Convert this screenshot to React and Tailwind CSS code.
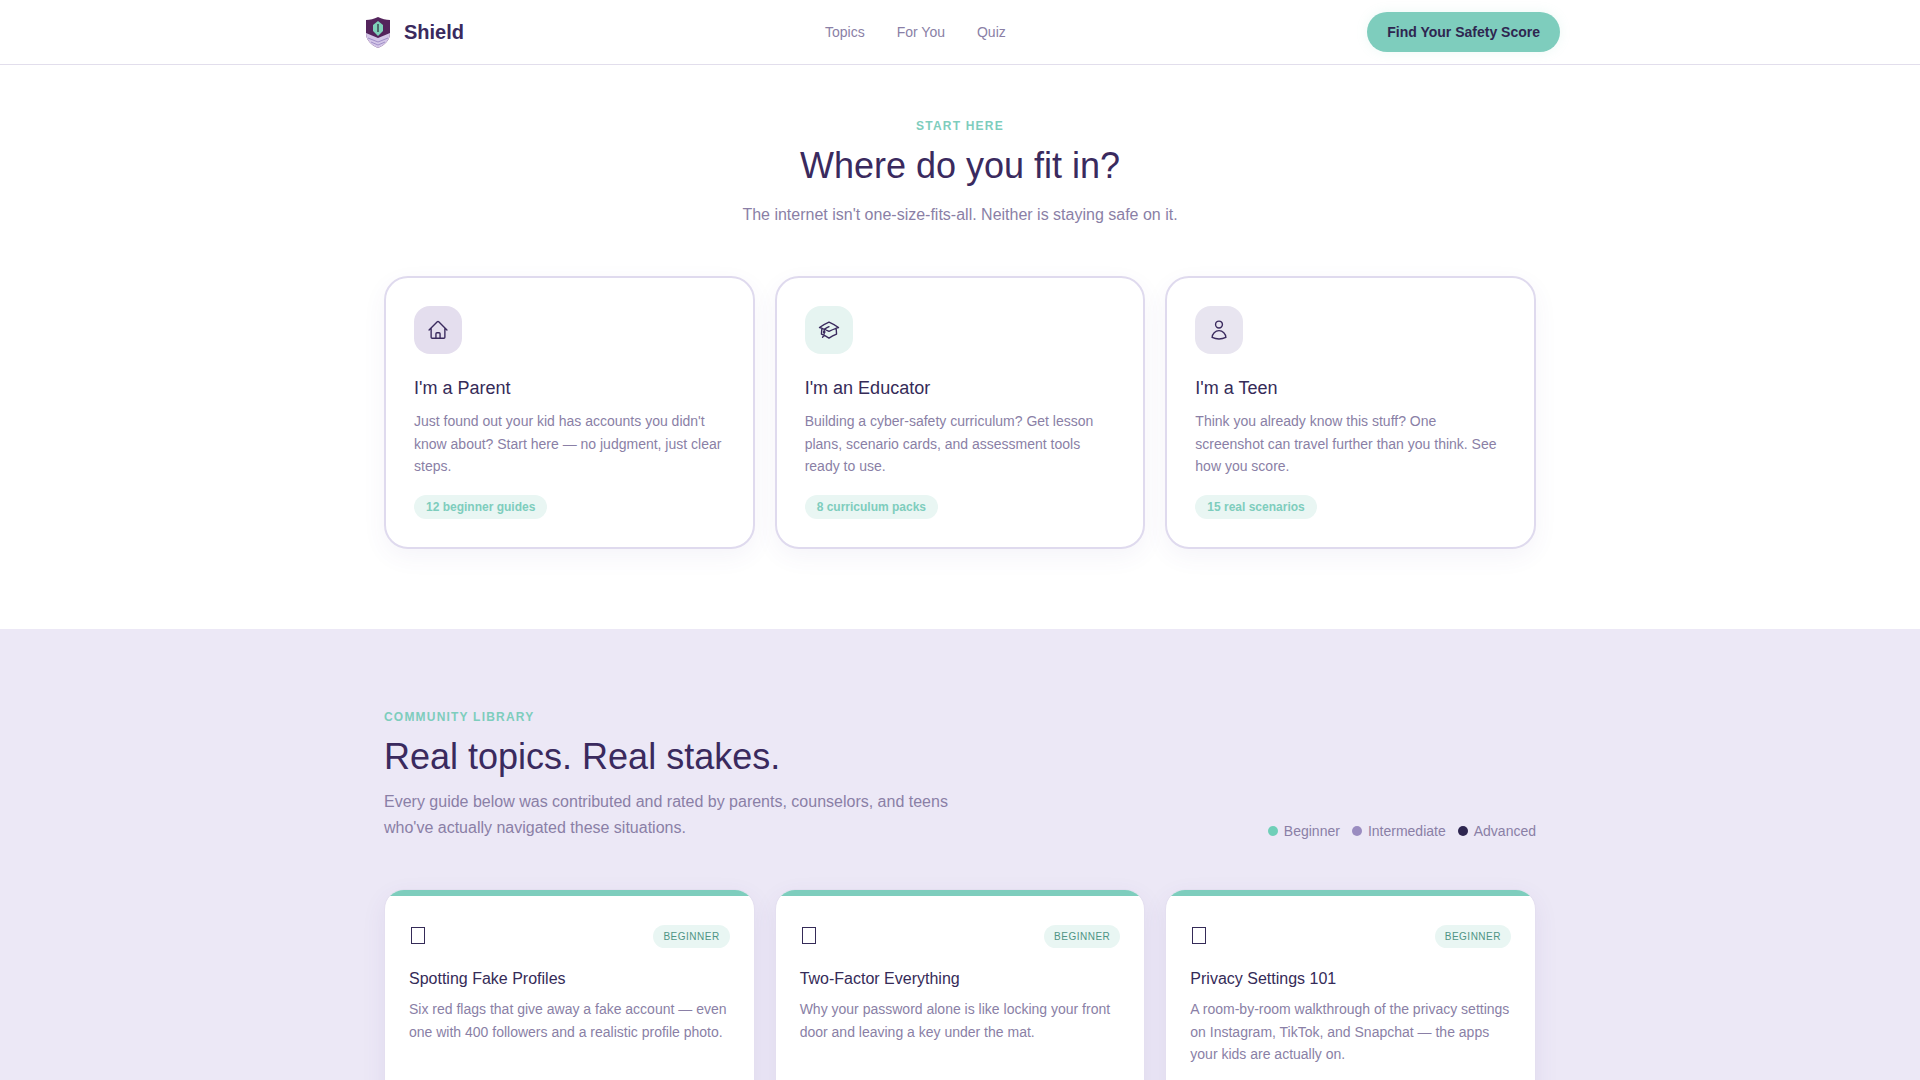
import { HiOutlineHome, HiOutlineAcademicCap, HiOutlineUser } from 'react-icons/hi2';

const audiences = [
  {
    title: "I'm a Parent",
    text: "Just found out your kid has accounts you didn't know about? Start here — no judgment, just clear steps.",
    tag: '12 beginner guides',
    Icon: HiOutlineHome,
    iconBg: 'bg-[#e4deee]',
  },
  {
    title: "I'm an Educator",
    text: 'Building a cyber-safety curriculum? Get lesson plans, scenario cards, and assessment tools ready to use.',
    tag: '8 curriculum packs',
    Icon: HiOutlineAcademicCap,
    iconBg: 'bg-[#e6f4f1]',
  },
  {
    title: "I'm a Teen",
    text: 'Think you already know this stuff? One screenshot can travel further than you think. See how you score.',
    tag: '15 real scenarios',
    Icon: HiOutlineUser,
    iconBg: 'bg-[#e8e5f0]',
  },
];

const topics = [
  {
    title: 'Spotting Fake Profiles',
    text: 'Six red flags that give away a fake account — even one with 400 followers and a realistic profile photo.',
  },
  {
    title: 'Two-Factor Everything',
    text: 'Why your password alone is like locking your front door and leaving a key under the mat.',
  },
  {
    title: 'Privacy Settings 101',
    text: 'A room-by-room walkthrough of the privacy settings on Instagram, TikTok, and Snapchat — the apps your kids are actually on.',
  },
];

function ShieldLogo() {
  return (
    <svg width="26" height="33" viewBox="0 0 26 33">
      <path d="M13 1 C17 3 21 4 25 4 L25 17 C25 24 20 29 13 32 C6 29 1 24 1 17 L1 4 C5 4 9 3 13 1 Z" fill="#54245c" />
      <path d="M1 17 L13 22 L25 17 C25 24 20 29 13 32 C6 29 1 24 1 17 Z" fill="#d4c6e8" />
      <path d="M3 22 L13 26 L23 22 M6 26 L13 29 L20 26" fill="none" stroke="#a08fc8" strokeWidth="1" />
      <path d="M13 5 L18 9 L18 15 L13 20 L8 15 L8 9 Z" fill="#7fd1b9" />
      <path d="M13 8 L13 16" stroke="#4a6a6a" strokeWidth="2" />
    </svg>
  );
}

export default function App() {
  return (
    <div className="h-screen overflow-hidden bg-white font-['Liberation_Sans',Arial,sans-serif] text-[#2e2650]">
      <header className="border-b border-[#e2deec] bg-white">
        <div className="mx-auto flex h-16 w-[1200px] items-center justify-between">
          <div className="flex w-[465px] items-center gap-[13px] pl-[5px]">
            <ShieldLogo />
            <span className="text-xl font-bold text-[#3a2a5e]">Shield</span>
          </div>
          <nav className="flex flex-1 items-center gap-8 text-sm text-[#8a7fa6]">
            <a>Topics</a>
            <a>For You</a>
            <a>Quiz</a>
          </nav>
          <button className="h-10 rounded-full bg-[#7ecdbd] px-5 text-sm font-bold text-[#2e2650] shadow-[0_0_12px_rgba(126,205,189,0.15)]">
            Find Your Safety Score
          </button>
        </div>
      </header>

      <section className="px-6 pt-[53px] pb-20">
        <div className="mx-auto w-[1152px]">
          <div className="text-center">
            <p className="text-xs font-bold tracking-[0.1em] text-[#7ecdbd]">START HERE</p>
            <h2 className="mt-[9px] text-4xl leading-[46px] text-[#3a2a5e]">Where do you fit in?</h2>
            <p className="mt-[14px] text-base text-[#8a7fa6]">The internet isn't one-size-fits-all. Neither is staying safe on it.</p>
          </div>
          <div className="mt-[49px] grid grid-cols-3 gap-5">
            {audiences.map(({ title, text, tag, Icon, iconBg }) => (
              <div key={title} className="h-[273px] rounded-3xl border-2 border-[#dfdaee] bg-white px-7 pt-7 shadow-[0_8px_24px_rgba(90,70,150,0.06)]">
                <div className={`flex h-12 w-12 items-center justify-center rounded-2xl ${iconBg}`}>
                  <Icon size={22} className="text-[#3a2a5e]" />
                </div>
                <h3 className="mt-5 text-lg leading-7 text-[#352b58]">{title}</h3>
                <p className="mt-[8.3px] text-sm leading-[22.4px] text-[#8a7fa6]">{text}</p>
                <span className="mt-[17px] inline-block rounded-full bg-[#e9f6f3] px-3 py-1 text-xs font-bold text-[#7ecdbd]">{tag}</span>
              </div>
            ))}
          </div>
        </div>
      </section>

      <section className="bg-[#ece8f6] px-6 pt-20 pb-20">
        <div className="mx-auto w-[1152px]">
          <div className="flex items-end justify-between">
            <div>
              <p className="text-xs font-bold tracking-[0.1em] text-[#7ecdbd]">COMMUNITY LIBRARY</p>
              <h2 className="mt-[9px] text-4xl leading-[46px] text-[#3a2a5e]">Real topics. Real stakes.</h2>
              <p className="mt-[9px] w-[580px] text-base leading-[25.6px] text-[#8a7fa6]">
                Every guide below was contributed and rated by parents, counselors, and teens who've actually navigated these situations.
              </p>
            </div>
            <div className="mb-[-1px] flex items-center gap-3 text-sm text-[#8a7fa6]">
              <span className="flex items-center gap-[6px]"><i className="h-[10px] w-[10px] rounded-full bg-[#6fcfb8]" />Beginner</span>
              <span className="flex items-center gap-[6px]"><i className="h-[10px] w-[10px] rounded-full bg-[#9a8cc0]" />Intermediate</span>
              <span className="flex items-center gap-[6px]"><i className="h-[10px] w-[10px] rounded-full bg-[#2e2650]" />Advanced</span>
            </div>
          </div>
          <div className="mt-[49px] grid grid-cols-3 gap-5">
            {topics.map(({ title, text }) => (
              <div key={title} className="h-[320px] overflow-hidden rounded-[20px] border border-[#e4dff0] bg-white shadow-[0_8px_24px_rgba(90,70,150,0.08)]">
                <div className="h-[6px] bg-[#7ecdbd]" />
                <div className="px-6 pt-6">
                  <div className="flex h-[32px] items-center justify-between">
                    <span className="ml-[2px] mb-[2px] h-[17px] w-[14px] border border-[#352b58]" />
                    <span className="rounded-full bg-[#e9f6f3] px-[10px] py-1 text-[10px] leading-[15px] tracking-[0.05em] text-[#4f9484]">BEGINNER</span>
                  </div>
                  <h3 className="mt-[15px] text-base text-[#352b58]">{title}</h3>
                  <p className="mt-[7.3px] text-sm leading-[22.4px] text-[#8a7fa6]">{text}</p>
                </div>
              </div>
            ))}
          </div>
        </div>
      </section>
    </div>
  );
}
